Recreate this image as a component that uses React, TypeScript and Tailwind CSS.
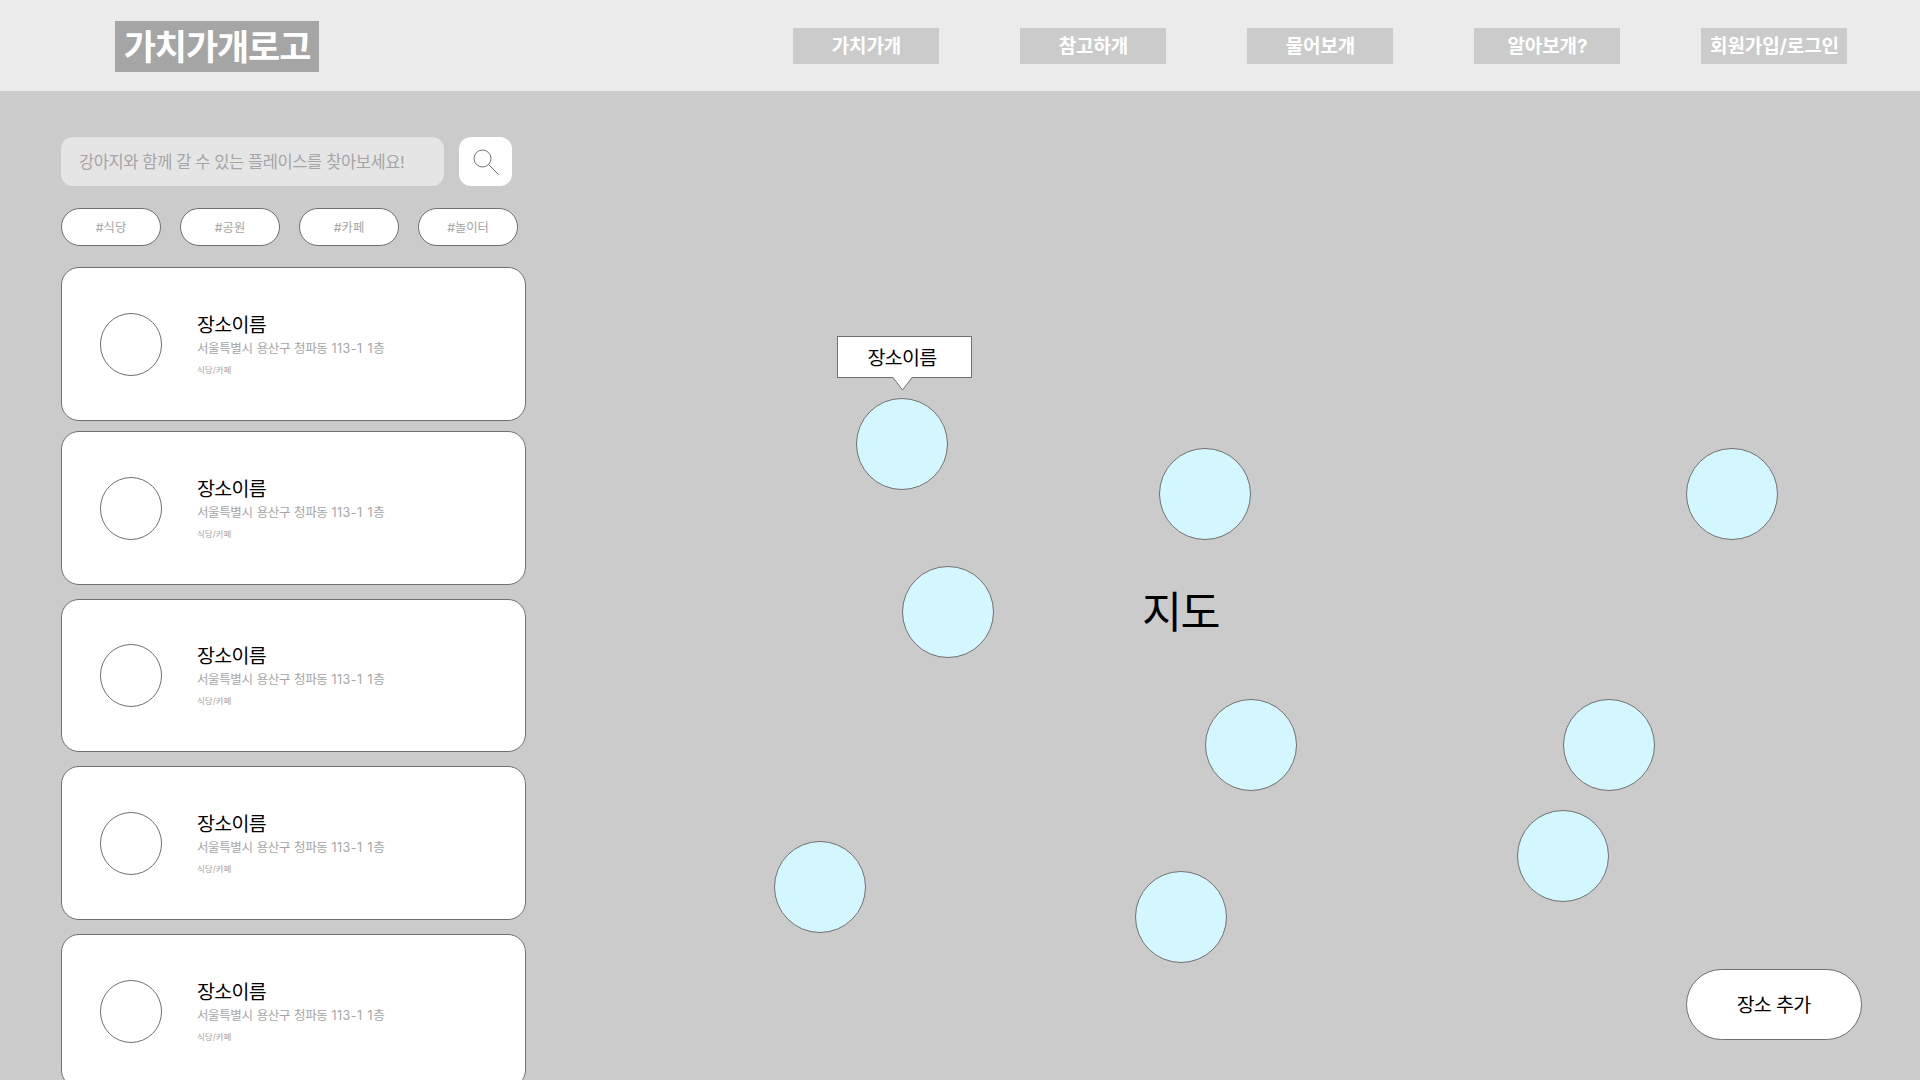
const navItems = ["가치가개", "참고하개", "물어보개", "알아보개?", "회원가입/로그인"];

const tags = ["#식당", "#공원", "#카페", "#놀이터"];

const cards = [
  "h-[154px] mb-[10px]",
  "h-[154px] mb-[14px]",
  "h-[153px] mb-[14px] pb-px",
  "h-[154px] mb-[14px]",
  "h-[154px]",
];

const pins = [
  "left-[856px] top-[398px]",
  "left-[1159px] top-[448px]",
  "left-[1686px] top-[448px]",
  "left-[902px] top-[566px]",
  "left-[1205px] top-[699px]",
  "left-[1563px] top-[699px]",
  "left-[774px] top-[841px]",
  "left-[1135px] top-[871px]",
  "left-[1517px] top-[810px]",
];

function PlaceCard({ className }: { className: string }) {
  return (
    <article
      className={`flex shrink-0 items-center rounded-[18px] border border-[#707070] bg-white pl-[38px] ${className}`}
    >
      <div className="h-[63px] w-[62px] shrink-0 rounded-full border border-[#707070]" />
      <div className="ml-[35px] whitespace-nowrap">
        <h2 className="pt-[2px] text-[19.5px] leading-[27px] tracking-[-0.7px] text-black">장소이름</h2>
        <p className="text-[12.5px] leading-[20px] tracking-[-0.38px] text-[#a5a5a5] [word-spacing:0.9px]">
          서울특별시 용산구 청파동 <span className="tracking-[0.5px]">113-1 1층</span>
        </p>
        <p className="mt-[3px] text-[8.5px] leading-[16px] text-[#a5a5a5]">식당/카페</p>
        <div className="h-px" />
      </div>
    </article>
  );
}

export default function App() {
  return (
    <div className="relative flex h-[1080px] w-[1920px] flex-col overflow-hidden bg-[#cbcbcb] font-['Inter','Noto_Sans_CJK_KR',sans-serif]">
      <header className="flex h-[91px] shrink-0 items-start justify-between bg-[#ebebeb] pr-[73px] pl-[115px]">
        <div className="mt-[21px] flex h-[51px] w-[204px] items-center justify-center bg-[#a5a5a5] pt-[2px] text-[35px] leading-none font-bold tracking-[-1.1px] whitespace-nowrap text-white">
          가치가개로고
        </div>
        <nav className="mt-[28px] flex gap-[81px]">
          {navItems.map((item) => (
            <a
              key={item}
              className="flex h-[36px] w-[146px] items-center justify-center bg-[#cbcbcb] pl-[1px] text-[19px] leading-none font-bold tracking-[-0.1px] whitespace-nowrap text-white"
            >
              {item}
            </a>
          ))}
        </nav>
      </header>

      <aside className="ml-[61px] flex w-[465px] flex-col pt-[46px]">
        <div className="flex gap-[15px]">
          <div className="flex h-[49px] w-[383px] items-center rounded-[12px] bg-[#e5e5e5] pt-[2px] pl-[18px] text-[16.5px] tracking-[-0.4px] whitespace-nowrap text-[#a5a5a5]">
            강아지와 함께 갈 수 있는 플레이스를 찾아보세요!
          </div>
          <button className="flex h-[49px] w-[53px] items-center justify-center rounded-[12px] bg-white">
            <svg width="26" height="26" viewBox="0 0 26 26" fill="none" stroke="#707070">
              <circle cx="9.5" cy="9.5" r="8.5" />
              <path d="M15.5 15.5 25.5 25.5" />
            </svg>
          </button>
        </div>
        <div className="mt-[22px] mb-[21px] flex gap-[19px]">
          {tags.map((tag) => (
            <button
              key={tag}
              className="flex h-[38px] w-[100px] items-center justify-center rounded-full border border-[#707070] bg-white pt-[2px] text-[12.3px] text-[#a5a5a5]"
            >
              {tag}
            </button>
          ))}
        </div>
        {cards.map((c, i) => (
          <PlaceCard key={i} className={c} />
        ))}
      </aside>

      <div className="absolute top-[583px] left-[1142px] text-[43.5px] leading-[58px] tracking-[-1.5px] text-black">지도</div>
      {pins.map((p) => (
        <div key={p} className={`absolute size-[92px] rounded-full border border-[#707070] bg-[#d4f7ff] ${p}`} />
      ))}
      <div className="absolute top-[336px] left-[837px] flex h-[42px] w-[135px] items-center justify-center border border-[#707070] bg-white pt-[3px] pr-[5px] text-[19.5px] tracking-[-0.7px] text-black">
        장소이름
        <svg className="absolute top-[40px] left-[54px]" width="22" height="14" viewBox="0 0 22 14">
          <path d="M0.5 0 10.5 13 20.5 0" fill="#fff" stroke="#707070" />
        </svg>
      </div>
      <button className="absolute top-[969px] left-[1686px] flex h-[71px] w-[176px] items-center justify-center rounded-full border border-[#707070] bg-white pt-[3px] pr-[1px] text-[19.5px] tracking-[-0.7px] text-black">
        장소 추가
      </button>
    </div>
  );
}
